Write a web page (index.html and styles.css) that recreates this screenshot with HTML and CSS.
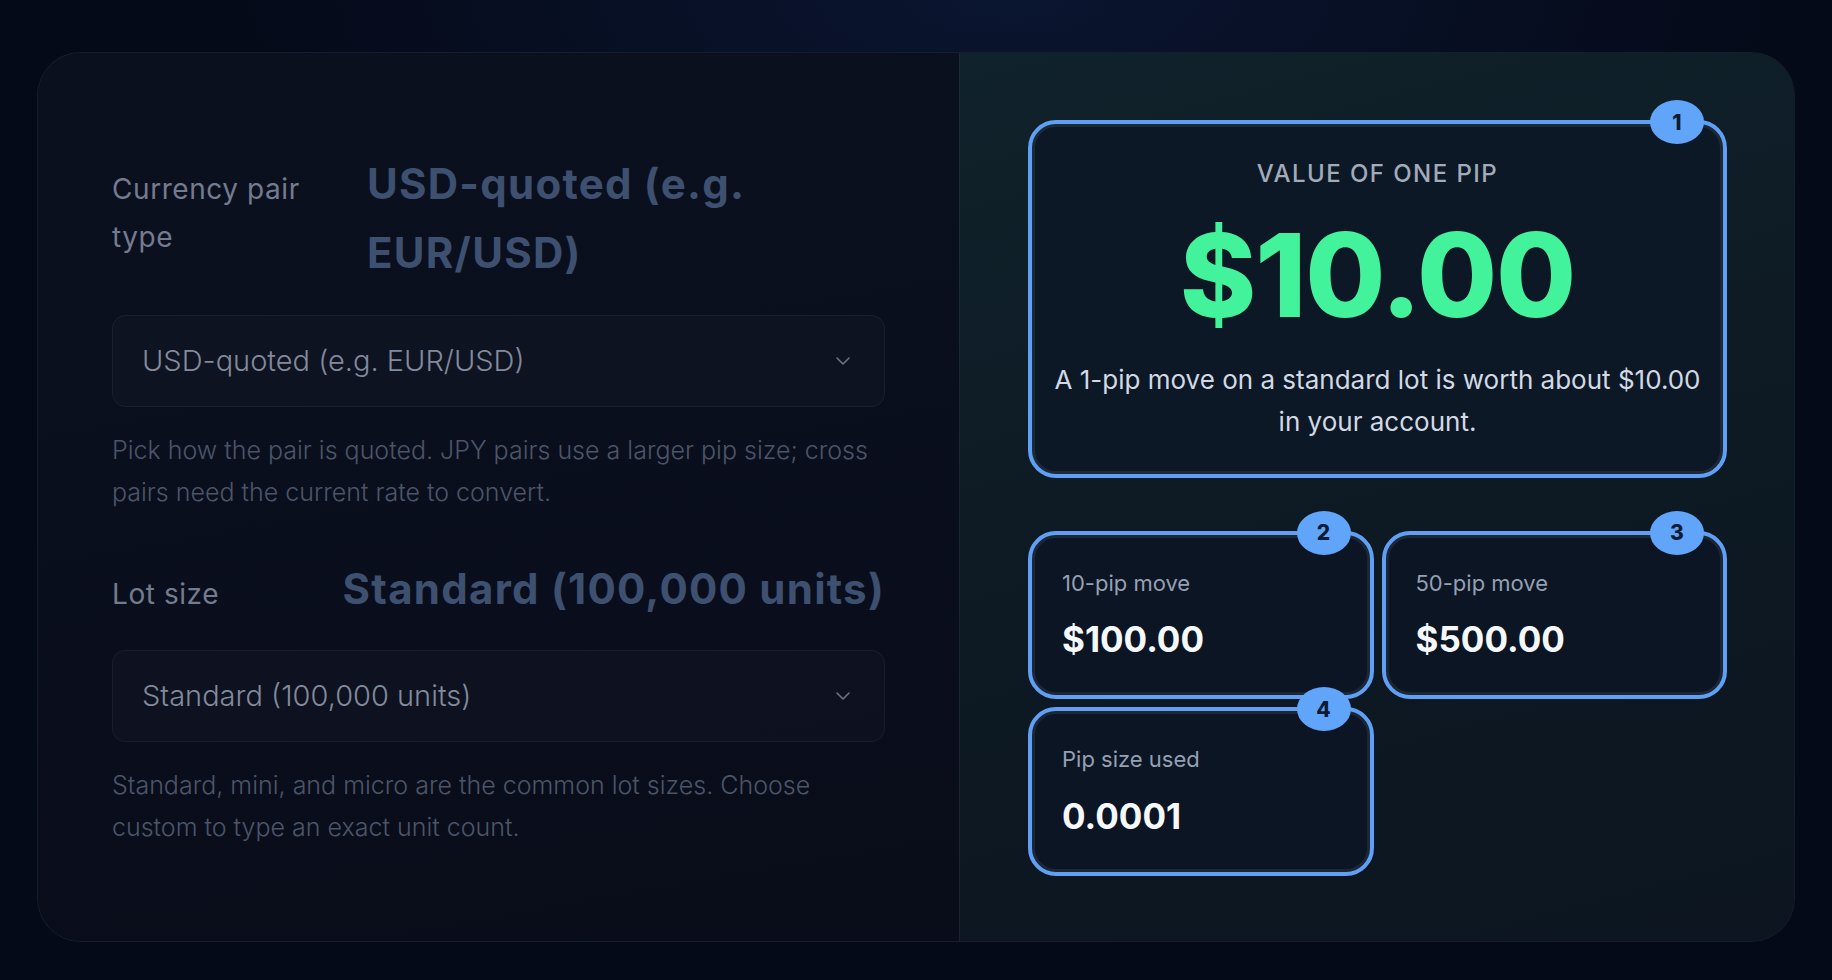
FILE: index.html
```html
<!DOCTYPE html>
<html lang="en">
  <head>
    <meta charset="UTF-8" />
    <title>Pip value calculator</title>
    <link rel="stylesheet" href="styles.css">
  </head>
  <body>
    <main class="calc">
      <section class="inputs">
        <div class="field">
          <div class="field-head">
            <label class="field-label" for="pair-type">Currency pair type</label>
            <div class="field-value">USD-quoted (e.g. EUR/USD)</div>
          </div>
          <div class="select-wrap">
            <select class="select" id="pair-type">
              <option>USD-quoted (e.g. EUR/USD)</option>
              <option>JPY-quoted (e.g. USD/JPY)</option>
              <option>Cross pair</option>
            </select>
            <svg class="chevron" viewBox="0 0 14 8" fill="none">
              <path d="M1 1l6 6 6-6" stroke="#6b7385" stroke-width="1.6" stroke-linecap="round" stroke-linejoin="round" />
            </svg>
          </div>
          <p class="help">Pick how the pair is quoted. JPY pairs use a larger pip size; cross pairs need the current rate to convert.</p>
        </div>

        <div class="field">
          <div class="field-head">
            <label class="field-label" for="lot-size">Lot size</label>
            <div class="field-value">Standard (100,000 units)</div>
          </div>
          <div class="select-wrap">
            <select class="select" id="lot-size">
              <option>Standard (100,000 units)</option>
              <option>Mini (10,000 units)</option>
              <option>Micro (1,000 units)</option>
              <option>Custom</option>
            </select>
            <svg class="chevron" viewBox="0 0 14 8" fill="none">
              <path d="M1 1l6 6 6-6" stroke="#6b7385" stroke-width="1.6" stroke-linecap="round" stroke-linejoin="round" />
            </svg>
          </div>
          <p class="help">Standard, mini, and micro are the common lot sizes. Choose custom to type an exact unit count.</p>
        </div>
      </section>

      <section class="results">
        <div class="result result-main">
          <span class="badge">1</span>
          <div class="result-title">Value of one pip</div>
          <div class="result-big">$10.00</div>
          <p class="result-note">A 1-pip move on a standard lot is worth about $10.00 in your account.</p>
        </div>

        <div class="result-grid">
          <div class="result result-small">
            <span class="badge">2</span>
            <div class="result-label">10-pip move</div>
            <div class="result-value">$100.00</div>
          </div>
          <div class="result result-small">
            <span class="badge">3</span>
            <div class="result-label">50-pip move</div>
            <div class="result-value">$500.00</div>
          </div>
          <div class="result result-small">
            <span class="badge">4</span>
            <div class="result-label">Pip size used</div>
            <div class="result-value">0.0001</div>
          </div>
        </div>
      </section>
    </main>
  </body>
</html>
```

FILE: styles.css
```css
* {
  box-sizing: border-box;
}
body {
  margin: 0;
  min-height: 100vh;
  padding: 52px 37px 38px;
  background: radial-gradient(ellipse 60% 40% at 55% 0%, #0a1530 0%, #050a19 70%), #040817;
  font-family: Inter, "Noto Sans", sans-serif;
  line-height: 1.7;
}
.calc {
  display: grid;
  grid-template-columns: 921px 1fr;
  border: 1px solid rgba(148, 163, 184, 0.1);
  border-radius: 44px;
  overflow: hidden;
  background: #0a0e1b;
}

/* left column */
.inputs {
  padding: 96px 74px 60px;
  background: linear-gradient(170deg, #0b101f 0%, #090d1a 100%);
}
.field + .field {
  margin-top: 40px;
}
.field-head {
  display: flex;
  justify-content: space-between;
  align-items: baseline;
  gap: 55px;
}
.field-label {
  flex: 0 0 auto;
  max-width: 200px;
  font-size: 28px;
  letter-spacing: 0.02em;
  color: #737c8e;
}
.field-value {
  flex: 0 1 auto;
  font-size: 42px;
  font-weight: 700;
  line-height: 1.65;
  letter-spacing: 0.03em;
  color: #3e5070;
}
.select-wrap {
  position: relative;
  margin-top: 27px;
}
.select {
  display: block;
  width: 100%;
  height: 92px;
  appearance: none;
  -webkit-appearance: none;
  background: rgba(255, 255, 255, 0.018);
  border: 1px solid rgba(255, 255, 255, 0.05);
  border-radius: 14px;
  padding: 0 80px 0 29px;
  font-family: inherit;
  font-size: 29px;
  font-weight: 300;
  color: #828a9c;
}
.chevron {
  position: absolute;
  right: 35px;
  top: 50%;
  width: 14px;
  height: 8px;
  transform: translateY(-50%);
}
.help {
  margin: 22px 0 0;
  font-size: 25px;
  font-weight: 300;
  color: #4c5568;
}

/* right column */
.results {
  padding: 67px 67px 65px 68px;
  border-left: 1px solid rgba(148, 163, 184, 0.1);
  background: linear-gradient(165deg, #10222b 0%, #0d1923 55%, #0c1520 100%);
}
.result {
  position: relative;
  border: 4px solid #5fa0f5;
  border-radius: 28px;
  background: #0c1826;
  box-shadow: inset 0 0 0 3px rgba(148, 163, 184, 0.12);
}
.result-main {
  padding: 30px 20px 31px;
  text-align: center;
}
.result-title {
  font-size: 24px;
  font-weight: 500;
  letter-spacing: 0.06em;
  text-transform: uppercase;
  color: #a1abba;
}
.result-big {
  margin-top: 17px;
  font-size: 116px;
  font-weight: 800;
  line-height: 1.1;
  letter-spacing: -0.01em;
  color: #43f39b;
}
.result-note {
  margin: 20px 0 0;
  font-size: 26px;
  line-height: 1.6;
  color: #d2d9e3;
}
.result-grid {
  display: grid;
  grid-template-columns: 1fr 1fr;
  gap: 8px;
  margin-top: 53px;
}
.result-small {
  padding: 30px 30px 33px;
  background: #0c1524;
}
.result-label {
  font-size: 22px;
  color: #95a0b3;
}
.result-value {
  margin-top: 15px;
  font-size: 35px;
  font-weight: 700;
  line-height: 1.3;
  color: #f5f8fc;
}
.badge {
  position: absolute;
  top: -24px;
  right: 19px;
  width: 54px;
  height: 44px;
  border-radius: 50%;
  background: #60a5fa;
  color: #0d1b33;
  font-size: 21px;
  font-weight: 800;
  line-height: 1;
  display: flex;
  align-items: center;
  justify-content: center;
}
```
